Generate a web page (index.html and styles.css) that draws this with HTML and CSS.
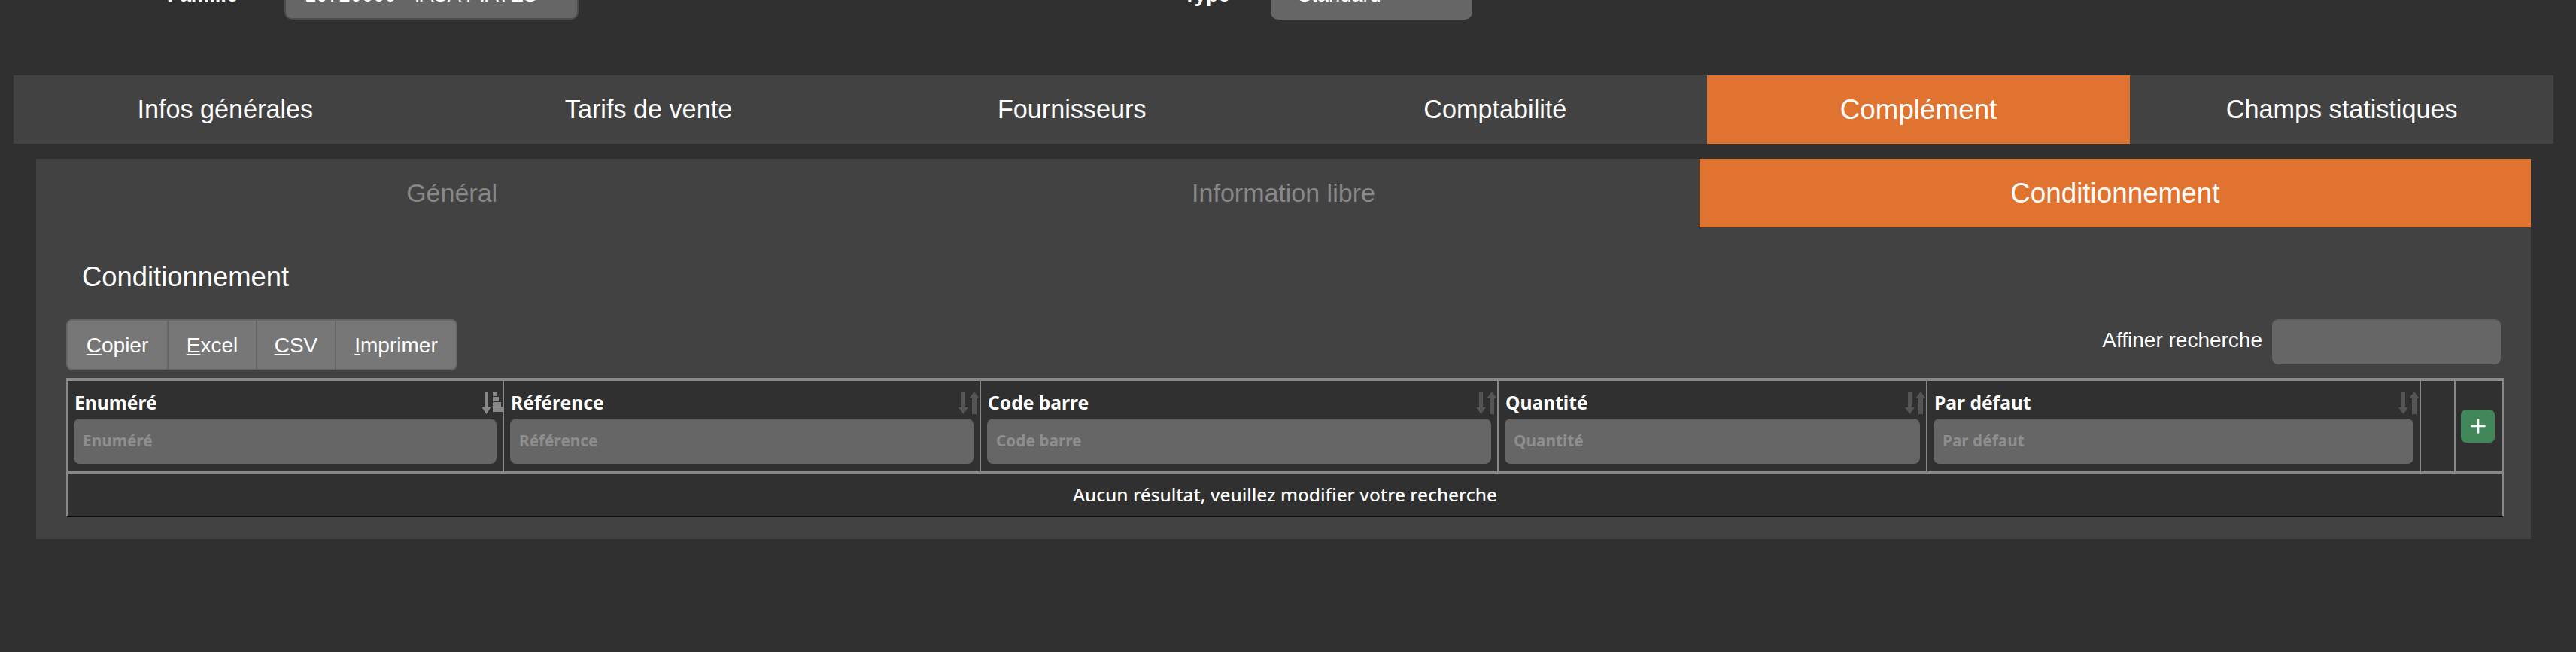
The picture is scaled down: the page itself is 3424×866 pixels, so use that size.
FILE: index.html
```html
<!DOCTYPE html>
<html lang="fr">
<head>
<meta charset="utf-8">
<title>Conditionnement</title>
<link rel="stylesheet" href="styles.css">
</head>
<body>
<div class="top-form">
  <span class="top-label top-label-family">Famille</span>
  <div class="top-select top-select-family"><span>10720000 - IASA PIATES</span></div>
  <span class="top-label top-label-type">Type</span>
  <div class="top-select top-select-type"><span>Standard</span></div>
</div>

<nav class="main-tabs">
  <a class="tab">Infos générales</a>
  <a class="tab">Tarifs de vente</a>
  <a class="tab">Fournisseurs</a>
  <a class="tab">Comptabilité</a>
  <a class="tab tab-active">Complément</a>
  <a class="tab">Champs statistiques</a>
</nav>

<section class="panel">
  <nav class="sub-tabs">
    <a class="tab tab-muted">Général</a>
    <a class="tab tab-muted">Information libre</a>
    <a class="tab tab-active">Conditionnement</a>
  </nav>
  <h2 class="panel-title">Conditionnement</h2>
  <div class="toolbar">
    <div class="btn-group">
      <button class="btn"><u>C</u>opier</button>
      <button class="btn"><u>E</u>xcel</button>
      <button class="btn"><u>C</u>SV</button>
      <button class="btn"><u>I</u>mprimer</button>
    </div>
    <label class="search">
      <span class="search-label">Affiner recherche</span>
      <input class="search-input" type="text">
    </label>
  </div>
  <table class="grid">
    <colgroup>
      <col class="c1"><col class="c2"><col class="c3"><col class="c4"><col class="c5"><col class="c6"><col class="c7">
    </colgroup>
    <thead>
      <tr>
        <th>
          <div class="th-label">Enuméré</div>
          <svg class="sort" viewBox="0 0 28 30"><path class="sort-on" d="M4 0h5v20h4L6.500 30 0 20h4z"/><path class="sort-on" d="M15 0h6v6h-6zM15 7h8v6h-8zM15 14h11v6H15zM15 21h13v6H15z"/></svg>
          <input class="filter" placeholder="Enuméré">
        </th>
        <th>
          <div class="th-label">Référence</div>
          <svg class="sort" viewBox="0 0 28 30"><path class="sort-off" d="M4 0h5v21h4L6.500 30 0 21h4z"/><path class="sort-off" d="M18 30V9h-4l7-9 6.500 9H24v21z"/></svg>
          <input class="filter" placeholder="Référence">
        </th>
        <th>
          <div class="th-label">Code barre</div>
          <svg class="sort" viewBox="0 0 28 30"><path class="sort-off" d="M4 0h5v21h4L6.500 30 0 21h4z"/><path class="sort-off" d="M18 30V9h-4l7-9 6.500 9H24v21z"/></svg>
          <input class="filter" placeholder="Code barre">
        </th>
        <th>
          <div class="th-label">Quantité</div>
          <svg class="sort" viewBox="0 0 28 30"><path class="sort-off" d="M4 0h5v21h4L6.500 30 0 21h4z"/><path class="sort-off" d="M18 30V9h-4l7-9 6.500 9H24v21z"/></svg>
          <input class="filter" placeholder="Quantité">
        </th>
        <th>
          <div class="th-label">Par défaut</div>
          <svg class="sort" viewBox="0 0 28 30"><path class="sort-off" d="M4 0h5v21h4L6.500 30 0 21h4z"/><path class="sort-off" d="M18 30V9h-4l7-9 6.500 9H24v21z"/></svg>
          <input class="filter" placeholder="Par défaut">
        </th>
        <th></th>
        <th class="th-add">
          <button class="add" aria-label="Ajouter"><svg viewBox="0 0 20 20" width="20" height="20"><path d="M8.700 .5h2.600v8.200h8.200v2.600h-8.200v8.200H8.700v-8.200H.5V8.700h8.200z" fill="#fff"/></svg></button>
        </th>
      </tr>
    </thead>
    <tbody>
      <tr><td colspan="7" class="empty">Aucun résultat, veuillez modifier votre recherche</td></tr>
    </tbody>
  </table>
</section>
</body>
</html>
```
FILE: styles.css
```css
* { box-sizing: border-box; }
html, body { margin: 0; padding: 0; }
body {
  width: 3424px;
  height: 866px;
  overflow: hidden;
  background: #303030;
  color: #fff;
  font-family: "Liberation Sans", Arial, sans-serif;
}

.top-form {
  display: flex;
  height: 26px;
  padding-left: 222px;
  font-size: 27.300px;
  line-height: 30px;
}
.top-label {
  font-weight: 700;
  margin-top: -22px;
  height: 30px;
}
.top-label-family { width: 156px; }
.top-label-type { width: 116px; margin-left: 804px; }
.top-select {
  height: 26px;
  overflow: hidden;
  background: #666;
  border-radius: 0 0 10px 10px;
}
.top-select span { display: block; margin-top: -22px; white-space: nowrap; }
.top-select-family {
  width: 391px;
  padding-left: 25px;
  border: 2px solid #4d4d4d;
  border-top: 0;
}
.top-select-type { width: 268px; padding-left: 36px; }

.main-tabs {
  display: flex;
  height: 91px;
  margin: 74px 30px 0 18px;
  background: #424242;
}
.tab {
  flex: 1 1 0;
  display: flex;
  align-items: center;
  justify-content: center;
  font-size: 34.200px;
  color: #fff;
}
.tab-active { background: #e0732f; font-size: 36.800px; }
.tab-muted { color: #888; font-size: 34px; }

.panel {
  height: 505px;
  margin: 20px 60px 0 48px;
  padding: 0 40px;
  background: #424242;
}
.sub-tabs {
  display: flex;
  height: 91px;
  margin: 0 -40px;
}
.panel-title {
  margin: 0;
  padding: 44px 0 0 21px;
  height: 122px;
  font-size: 36.400px;
  line-height: 44px;
  font-weight: 400;
}
.toolbar {
  display: flex;
  justify-content: space-between;
  align-items: flex-start;
  height: 68px;
}
.btn-group {
  display: grid;
  grid-template-columns: 134px 118px 105px 1fr;
  height: 68px;
  width: 520px;
  background: #777;
  border: 2px solid #666;
  border-radius: 8px;
}
.btn {
  height: 100%;
  padding: 2px 0 0;
  border: 0;
  border-right: 2px solid #666;
  background: transparent;
  color: #fff;
  font: 28px "Liberation Sans", Arial, sans-serif;
}
.btn:last-child { border-right: 0; }
.search { display: flex; align-items: flex-start; }
.search-label {
  margin-right: 13px;
  font-size: 28px;
  line-height: 56px;
}
.search-input {
  width: 304px;
  height: 60px;
  border: 0;
  border-top: 2px solid #606060;
  border-radius: 8px;
  background: #666;
}

.grid {
  width: 3240px;
  margin-top: 10px;
  table-layout: fixed;
  border-collapse: separate;
  border-spacing: 0;
  background: #303030;
  border-top: 4px solid #88888a;
  border-left: 2px solid #88888a;
  border-right: 2px solid #88888a;
  border-bottom: 2px solid #0e0e0e;
  font-family: "Noto Sans", "Open Sans", sans-serif;
}
.c1 { width: 580px; }
.c2 { width: 634px; }
.c3 { width: 688px; }
.c4 { width: 570px; }
.c5 { width: 656px; }
.c6 { width: 46px; }
.c7 { width: 62px; }

.grid th {
  position: relative;
  height: 120px;
  padding: 0 8px 10px 8px;
  vertical-align: bottom;
  text-align: left;
  border-right: 2px solid #88888a;
}
.grid th:last-child { border-right: 0; }
.th-label {
  font-size: 24.600px;
  line-height: 32px;
  font-weight: 700;
  margin-bottom: 5px;
  margin-left: 1px;
}
.sort {
  position: absolute;
  top: 14px;
  right: 0;
  width: 28px;
  height: 30px;
}
.sort-on { fill: #888; }
.sort-off { fill: #555; }
.filter {
  display: block;
  width: 100%;
  height: 60px;
  padding: 0 13px 4px 12px;
  border: 0;
  border-top: 2px solid #606060;
  border-radius: 8px;
  background: #666;
  color: #fff;
  font: 700 20.800px "Noto Sans", "Open Sans", sans-serif;
}
.filter::placeholder { color: #8e8e8e; opacity: 1; }
.grid .th-add { padding: 0; vertical-align: middle; }
.add {
  display: flex;
  align-items: center;
  justify-content: center;
  width: 45px;
  height: 44px;
  margin: 0 0 0 7px;
  padding: 0;
  border: 0;
  border-radius: 7px;
  background: #41875a;
}
.empty {
  height: 59px;
  padding: 0 0 2px;
  border-top: 4px solid #88888a;
  text-align: center;
  font-size: 24.300px;
  font-weight: 500;
  color: #fff;
}
```
